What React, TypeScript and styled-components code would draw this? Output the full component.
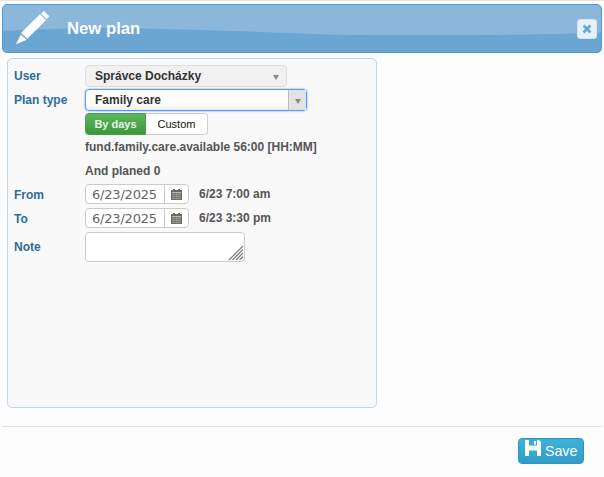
import * as React from 'react';
import styled, { createGlobalStyle } from 'styled-components';

const GlobalStyle = createGlobalStyle`
	html, body {
		margin: 0;
		padding: 0;
		background: #fdfdfd;
		font-family: "Liberation Sans", Arial, sans-serif;
		font-size: 12px;
	}
	* {
		box-sizing: border-box;
	}
`;

const Page = styled.div`
	width: 604px;
	height: 477px;
	padding: 4px 2px 0;
	border-top: 1px solid #e4e4e4;
	display: flex;
	flex-direction: column;
`;

const Header = styled.header`
	position: relative;
	height: 49px;
	margin-top: -1px;
	display: flex;
	align-items: center;
	justify-content: space-between;
	padding: 0 4px 0 12px;
	background: #6ba5d2;
	border: 1px solid #4a9bd8;
	border-radius: 5px;
	overflow: hidden;
`;

const Wave = styled.svg`
	position: absolute;
	left: 0;
	top: 0;
	width: 100%;
	height: 100%;
`;

const PencilIcon = styled.svg`
	position: relative;
	width: 36px;
	height: 36px;
	flex: none;
`;

const Title = styled.h1`
	position: relative;
	flex: 1;
	margin: 0 0 0 16px;
	color: #fff;
	font-size: 16.7px;
	font-weight: bold;
`;

const CloseButton = styled.button`
	position: relative;
	width: 20px;
	height: 20px;
	padding: 0;
	display: flex;
	align-items: center;
	justify-content: center;
	background: #e6f1fa;
	border: 1px solid #d3e5f3;
	border-radius: 3px;
`;

const Panel = styled.section`
	width: 370px;
	height: 350px;
	margin: 5px 0 0 5px;
	padding: 6px 6px;
	background: #f9f9f9;
	border: 1px solid #bcd7ee;
	border-radius: 5px;
`;

const Row = styled.div<{ $height: number; $top?: number }>`
	display: grid;
	grid-template-columns: 71px 1fr;
	align-items: center;
	height: ${p => p.$height}px;
	margin-top: ${p => p.$top || 0}px;
`;

const Label = styled.label<{ $shift?: boolean }>`
	color: #2d6d9c;
	font-weight: bold;
	font-size: 12px;
	padding-top: ${p => (p.$shift ? '2px' : '0')};
`;

const SelectBox = styled.div<{ $focused?: boolean }>`
	position: relative;
	display: flex;
	align-items: center;
	justify-content: space-between;
	height: 22px;
	color: #333;
	font-weight: bold;
	font-size: 12px;
	background: ${p => (p.$focused ? 'linear-gradient(#fff 70%, #eee)' : '#f1f1f1')};
	border: 1px solid ${p => (p.$focused ? '#5897fb' : '#ddd')};
	border-radius: 4px;
	width: ${p => (p.$focused ? '222px' : '202px')};
	padding-left: 9px;
	box-shadow: ${p => (p.$focused ? '0 0 2px #5897fb' : 'none')};
`;

const SelectArrow = styled.span<{ $boxed?: boolean }>`
	display: flex;
	align-items: center;
	justify-content: center;
	height: 100%;
	width: ${p => (p.$boxed ? '18px' : '20px')};
	background: ${p => (p.$boxed ? '#e2e2e2' : 'transparent')};
	border-left: ${p => (p.$boxed ? '1px solid #bbb' : '0')};

	&::after {
		content: '';
		margin-top: 2px;
		border-style: solid;
		border-width: 5px 3.5px 0;
		border-color: #888 transparent transparent;
	}
`;

const Toggle = styled.div`
	display: flex;
	height: 22px;
`;

const ToggleButton = styled.button<{ $active?: boolean }>`
	height: 22px;
	padding: 0;
	font-family: inherit;
	font-size: 11px;
	font-weight: ${p => (p.$active ? 'bold' : 'normal')};
	color: ${p => (p.$active ? '#e8f5e8' : '#111')};
	width: ${p => (p.$active ? '61px' : '62px')};
	background: ${p => (p.$active ? 'linear-gradient(#5cb85c, #3c963c)' : '#fff')};
	border: 1px solid ${p => (p.$active ? '#4a9e4a' : '#ccc')};
	border-left-width: ${p => (p.$active ? '1px' : '0')};
	border-radius: ${p => (p.$active ? '4px 0 0 4px' : '0 4px 4px 0')};
`;

const InfoText = styled.div`
	color: #555;
	font-weight: bold;
	font-size: 12px;
`;

const DateWrap = styled.div`
	display: flex;
	align-items: center;
	gap: 10px;
`;

const DateGroup = styled.div`
	display: flex;
	width: 104px;
	height: 20px;
	background: #fff;
	border: 1px solid #ccc;
	border-radius: 4px;
`;

const DateInput = styled.input`
	width: 79px;
	height: 100%;
	padding: 0 0 0 6px;
	border: 0;
	border-right: 1px solid #ccc;
	border-radius: 4px 0 0 4px;
	background: transparent;
	outline: 0;
	color: #666;
	font-family: "DejaVu Sans", sans-serif;
	font-size: 13px;
	letter-spacing: -0.2px;
`;

const CalendarButton = styled.span`
	flex: 1;
	display: flex;
	align-items: center;
	justify-content: center;
`;

const NoteWrap = styled.div`
	position: relative;
	width: 160px;
	height: 30px;
`;

const NoteArea = styled.textarea`
	display: block;
	width: 100%;
	height: 100%;
	resize: none;
	background: #fff;
	border: 1px solid #ccc;
	border-radius: 4px;
	outline: 0;
`;

const ResizeGrip = styled.svg`
	position: absolute;
	right: 1px;
	bottom: 1px;
	width: 16px;
	height: 16px;
`;

const Footer = styled.footer`
	margin-top: 18px;
	border-top: 1px solid #e3e3e3;
	display: flex;
	justify-content: flex-end;
	padding: 11px 18px 0 0;
`;

const SaveButton = styled.button`
	display: flex;
	align-items: center;
	gap: 4px;
	width: 66px;
	height: 26px;
	padding: 0 0 0 6px;
	color: #fff;
	font-family: inherit;
	font-size: 14.2px;
	background: linear-gradient(#3fb2d9, #2f9cc8);
	border: 1px solid #2d94c0;
	border-radius: 4px;
`;

const SaveIcon = styled.svg`
	width: 16px;
	height: 16px;
	margin-bottom: 6px;
`;

const Calendar = () => (
	<svg width="11" height="11" viewBox="0 0 11 11">
		<rect x="0" y="1" width="11" height="10" fill="#6b6b5e" />
		<rect x="2" y="0" width="2" height="2" fill="#6b6b5e" />
		<rect x="7" y="0" width="2" height="2" fill="#6b6b5e" />
		<rect x="1" y="3" width="9" height="1" fill="#bbb" />
		<path d="M1 5.5h9M1 7.5h9M1 9.5h9" stroke="#aaa" strokeWidth="0.6" />
		<path d="M3 4v6.5M5.5 4v6.5M8 4v6.5" stroke="#aaa" strokeWidth="0.6" />
	</svg>
);

export default function App() {
	return (
		<>
			<GlobalStyle />
			<Page>
				<Header>
					<Wave viewBox="0 0 600 49" preserveAspectRatio="none">
						<path d="M0 0H600V29C500 32 420 32 330 31C250 28 170 24 80 24C50 25 25 26 0 27Z" fill="#8ab7da" />
					</Wave>
					<PencilIcon viewBox="0 0 36 36">
						<path d="M6 22L25 3.3L31 9.3L12.3 27.7Z" fill="#fff" />
						<path d="M26 2.7L29 0L34.3 5.3L31.7 8.3Z" fill="#fff" />
						<path d="M1 33.3L5.7 23.7L11.7 28.7Z" fill="#fff" />
					</PencilIcon>
					<Title>New plan</Title>
					<CloseButton aria-label="Close">
						<svg width="10" height="10" viewBox="0 0 10 10">
							<path d="M1.5 1.5L8.5 8.5M8.5 1.5L1.5 8.5" stroke="#6ba5d2" strokeWidth="2.6" />
						</svg>
					</CloseButton>
				</Header>
				<Panel>
					<Row $height={22}>
						<Label>User</Label>
						<SelectBox>
							Správce Docházky
							<SelectArrow />
						</SelectBox>
					</Row>
					<Row $height={22} $top={2}>
						<Label>Plan type</Label>
						<SelectBox $focused>
							Family care
							<SelectArrow $boxed />
						</SelectBox>
					</Row>
					<Row $height={22} $top={2}>
						<span />
						<Toggle>
							<ToggleButton $active>By days</ToggleButton>
							<ToggleButton>Custom</ToggleButton>
						</Toggle>
					</Row>
					<Row $height={23}>
						<span />
						<InfoText>fund.family.care.available 56:00 [HH:MM]</InfoText>
					</Row>
					<Row $height={25}>
						<span />
						<InfoText>And planed 0</InfoText>
					</Row>
					<Row $height={22}>
						<Label $shift>From</Label>
						<DateWrap>
							<DateGroup>
								<DateInput readOnly value="6/23/2025" />
								<CalendarButton><Calendar /></CalendarButton>
							</DateGroup>
							<InfoText>6/23 7:00 am</InfoText>
						</DateWrap>
					</Row>
					<Row $height={22} $top={2}>
						<Label $shift>To</Label>
						<DateWrap>
							<DateGroup>
								<DateInput readOnly value="6/23/2025" />
								<CalendarButton><Calendar /></CalendarButton>
							</DateGroup>
							<InfoText>6/23 3:30 pm</InfoText>
						</DateWrap>
					</Row>
					<Row $height={30} $top={3}>
						<Label>Note</Label>
						<NoteWrap>
							<NoteArea />
							<ResizeGrip viewBox="0 0 16 16">
								<path d="M15 1L1 15M15 4.5L4.5 15M15 8L8 15M15 11.5L11.5 15" stroke="#808080" strokeWidth="1.3" fill="none" />
							</ResizeGrip>
						</NoteWrap>
					</Row>
				</Panel>
				<Footer>
					<SaveButton>
						<SaveIcon viewBox="0 0 16 16">
							<path d="M0 0H14L16 2V16H0Z" fill="#fff" />
							<rect x="4" y="0" width="8" height="5.5" fill="#3aaad3" />
							<rect x="9" y="1" width="2" height="3.5" fill="#fff" />
							<rect x="4" y="10.5" width="8" height="5.5" fill="#3aaad3" />
						</SaveIcon>
						Save
					</SaveButton>
				</Footer>
			</Page>
		</>
	);
}
